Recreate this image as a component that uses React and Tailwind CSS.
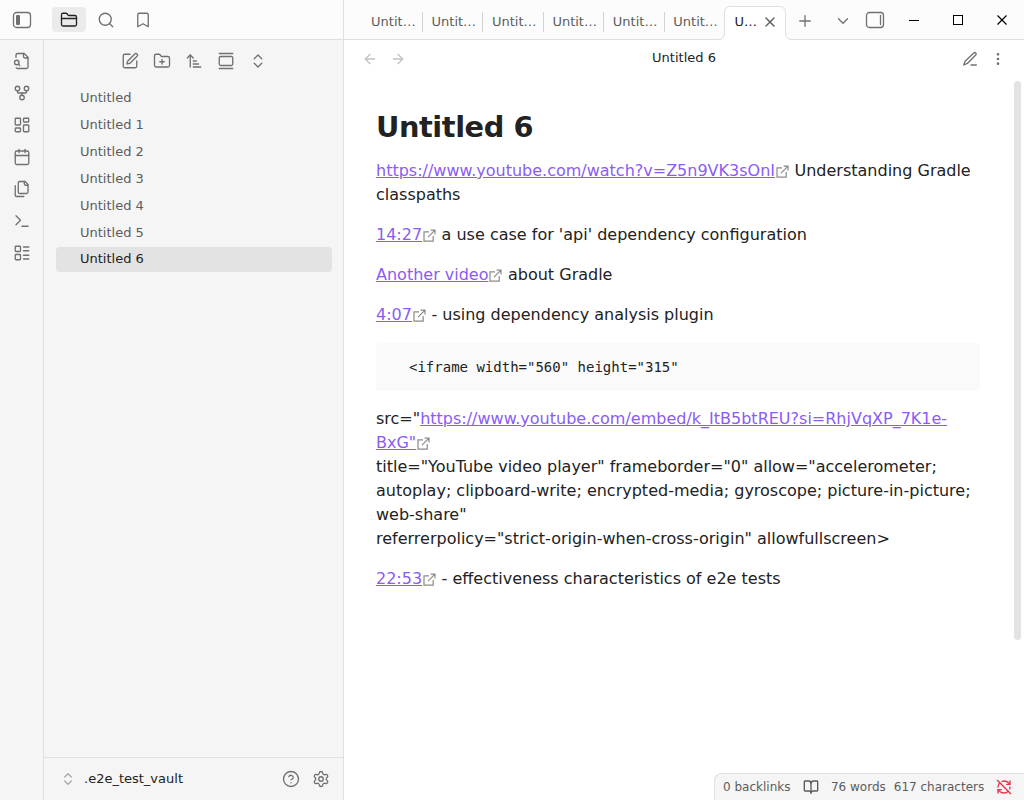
import React from 'react';
import {
  FolderClosed, Search, Bookmark, GitFork, LayoutDashboard, Calendar, Terminal, LayoutList,
  SquarePen, FolderPlus, ArrowUpNarrowWide, GalleryVertical, ChevronsUpDown, ArrowLeft, ArrowRight, X, Plus,
  ChevronDown, EllipsisVertical, BookOpen, RefreshCwOff, Settings, CircleHelp,
} from 'lucide-react';

const Files = ({ size }) => (
  <svg width={size} height={size} viewBox="0 0 24 24" fill="none" stroke="currentColor" strokeWidth="1.75" strokeLinecap="round" strokeLinejoin="round">
    <path d="M20 7h-3a2 2 0 0 1-2-2V2" />
    <path d="M9 18a2 2 0 0 1-2-2V4a2 2 0 0 1 2-2h7l4 4v10a2 2 0 0 1-2 2Z" />
    <path d="M3 7.6v12.8A1.6 1.6 0 0 0 4.6 22h9.8" />
  </svg>
);

const QuickSwitch = ({ size }) => (
  <svg width={size} height={size} viewBox="0 0 24 24" fill="none" stroke="currentColor" strokeWidth="1.75" strokeLinecap="round" strokeLinejoin="round">
    <path d="M14 2v4a2 2 0 0 0 2 2h4" />
    <path d="M4.268 21a2 2 0 0 0 1.727 1H18a2 2 0 0 0 2-2V7l-5-5H6a2 2 0 0 0-2 2v3" />
    <path d="m9 18-1.5-1.5" />
    <circle cx="5" cy="14" r="3" />
  </svg>
);

const EditLine = () => (
  <svg width="16" height="16" viewBox="0 0 24 24" fill="none" stroke="currentColor" strokeWidth="2" strokeLinecap="round" strokeLinejoin="round">
    <path d="M13.5 21h8" />
    <path d="M17.6 3.1a2.12 2.12 0 0 1 3 3L8 18.7 2.6 21l1.7-5.1Z" />
  </svg>
);

const SidebarToggle = ({ right }) => (
  <svg width="20" height="18" viewBox="0 0 20 18" fill="none" stroke="currentColor" strokeWidth="1.3">
    <rect x="1.5" y="1.5" width="17" height="15" rx="3" />
    {right
      ? <path d="M15.5 4.5v9" strokeLinecap="round" />
      : <rect x="4" y="4" width="4" height="10" rx="1" fill="currentColor" stroke="none" />}
  </svg>
);

const External = () => (
  <svg className="mr-[0.8px] ml-[0.6px] inline-block align-[-2px]" width="13" height="13" viewBox="0 0 13 13" fill="none" stroke="#8a8a8a" strokeWidth="1.2">
    <path d="M6 2.9H1v9.2h9.2V7M7.6 1.1h4.4v4.4M11.8 1.3 5 8.1" />
  </svg>
);

const Link = ({ children }) => (
  <><span className="text-[#8a5cf5] underline">{children}</span><External /></>
);

const files = ['Untitled', 'Untitled 1', 'Untitled 2', 'Untitled 3', 'Untitled 4', 'Untitled 5'];
const ribbon = [QuickSwitch, GitFork, LayoutDashboard, Calendar, Files, Terminal, LayoutList];
const actions = [SquarePen, FolderPlus, ArrowUpNarrowWide, GalleryVertical, ChevronsUpDown];

function TitleBar() {
  return (
    <header className="flex h-10 shrink-0 bg-[#fcfcfc] text-[#707070]">
      <div className="flex w-[344px] items-center border-r border-b border-[#e0e0e0] pl-3">
        <SidebarToggle />
        <div className="ml-5 flex h-[25px] w-[34px] items-center justify-center rounded bg-[#ebebeb] text-[#222222]">
          <FolderClosed size={18} strokeWidth={1.75} />
        </div>
        <Search className="ml-[11px]" size={18} strokeWidth={1.75} />
        <Bookmark className="ml-[19px]" size={18} strokeWidth={1.75} />
      </div>
      <div className="w-[18.5px] border-b border-[#e0e0e0]" />
      <div className="flex w-[362.5px] border-b border-[#e0e0e0] pt-3 text-[13px] text-[#5c5c5c]">
        {[0, 1, 2, 3, 4, 5].map((i) => (
          <div key={i} className={`flex h-5 w-[60.45px] shrink-0 items-center pl-[8.6px] ${i < 5 ? 'border-r border-[#d4d4d4]' : ''}`}>Untit…</div>
        ))}
      </div>
      <div className="relative -ml-px mt-[6px] flex h-[34px] w-[62.4px] items-center rounded-t-md border border-b-0 border-[#e0e0e0] bg-white pb-[4px] pl-[9.5px] text-[13px] text-[#222222]">
        <span className="w-[27.5px]">U…</span>
        <X className="mt-px text-[#5c5c5c]" size={16} strokeWidth={2} />
        <svg className="absolute bottom-0 -left-[6px]" width="6" height="6" viewBox="0 0 6 6"><path d="M0 5.5A5.5 5.5 0 0 0 5.5 0H6v6H0Z" fill="#fff" /><path d="M0 5.5A5.5 5.5 0 0 0 5.5 0" fill="none" stroke="#e0e0e0" /></svg>
        <svg className="absolute -right-[6px] bottom-0" width="6" height="6" viewBox="0 0 6 6"><path d="M6 5.5A5.5 5.5 0 0 1 .5 0H0v6h6Z" fill="#fff" /><path d="M6 5.5A5.5 5.5 0 0 1 .5 0" fill="none" stroke="#e0e0e0" /></svg>
      </div>
      <div className="flex flex-1 items-center border-b border-[#e0e0e0]">
        <Plus className="mt-[3px] ml-[9.6px]" size={18} strokeWidth={1.75} />
        <ChevronDown className="mt-[3px] ml-[20px]" size={18} strokeWidth={1.75} />
        <span className="ml-[13px]"><SidebarToggle right /></span>
        <svg className="ml-auto text-[#000000]" width="118" height="20" viewBox="0 0 118 20" fill="none" stroke="currentColor">
          <path d="M3 10.5h10" />
          <rect x="47.5" y="5.5" width="9" height="9" />
          <path d="m91.5 5.5 9 9m0-9-9 9" strokeWidth="1.2" />
        </svg>
      </div>
    </header>
  );
}

function Sidebar() {
  return (
    <aside className="flex w-[344px] shrink-0 border-r border-[#e0e0e0] bg-[#f5f5f5] text-[#707070]">
      <nav className="flex w-11 flex-col items-center gap-[14px] border-r border-[#e0e0e0] pt-3">
        {ribbon.map((Icon, i) => <Icon key={i} size={18} strokeWidth={1.75} />)}
      </nav>
      <div className="flex flex-1 flex-col text-[13px]">
        <div className="flex h-[45px] items-center justify-center gap-[14px] pb-[3px]">
          {actions.map((Icon, i) => <Icon key={i} size={18} strokeWidth={1.75} />)}
        </div>
        <div className="flex-1 pr-[11px] pl-3 text-[#5c5c5c]">
          {files.map((f) => <div key={f} className="mb-[2px] flex h-[25px] items-center pl-6">{f}</div>)}
          <div className="flex h-[25px] items-center rounded bg-[#e3e3e3] pb-[2px] pl-6 text-[#222222]">Untitled 6</div>
        </div>
        <div className="flex h-[43px] items-center border-t border-[#e0e0e0] pr-[13px] pl-4">
          <ChevronsUpDown className="text-[#ababab]" size={16} strokeWidth={2} />
          <span className="ml-2 flex-1 text-[#222222]">.e2e_test_vault</span>
          <CircleHelp size={18} strokeWidth={1.75} />
          <Settings className="ml-3" size={18} strokeWidth={1.75} />
        </div>
      </div>
    </aside>
  );
}

function Note() {
  return (
    <main className="relative flex flex-1 flex-col bg-white text-[#222222]">
      <div className="flex h-10 shrink-0 items-center px-[18px] pb-[2px] text-[#707070]">
        <ArrowLeft className="text-[#c2c2c2]" size={16} strokeWidth={2} />
        <ArrowRight className="ml-3 text-[#c2c2c2]" size={16} strokeWidth={2} />
        <span className="flex-1 pb-[2px] text-center text-[13px] text-[#222222]">Untitled 6</span>
        <EditLine />
        <EllipsisVertical className="ml-3" size={16} strokeWidth={2} />
      </div>
      <div className="flex-1 pr-11 pl-8 text-[16px] leading-6">
        <h1 className="mt-[30px] text-[28.8px] leading-[34px] font-bold tracking-[-0.015em]">Untitled 6</h1>
        <p className="mt-[15px]"><Link>https://www.youtube.com/watch?v=Z5n9VK3sOnI</Link> Understanding Gradle<br />classpaths</p>
        <p className="mt-4"><Link>14:27</Link> a use case for 'api' dependency configuration</p>
        <p className="mt-4"><Link>Another video</Link> about Gradle</p>
        <p className="mt-4"><Link>4:07</Link> - using dependency analysis plugin</p>
        <pre className="mt-4 flex h-12 items-center rounded bg-[#fafafa] pl-[33px] font-['DejaVu_Sans_Mono',monospace] text-[14px]">{'<iframe width="560" height="315"'}</pre>
        <p className="mt-4 whitespace-nowrap">
          src="<span className="text-[#8a5cf5] underline">https://www.youtube.com/embed/k_ItB5btREU?si=RhjVqXP_7K1e-</span><br />
          <Link>BxG"</Link><br />
          title="YouTube video player" frameborder="0" allow="accelerometer;<br />
          autoplay; clipboard-write; encrypted-media; gyroscope; picture-in-picture;<br />
          web-share"<br />
          referrerpolicy="strict-origin-when-cross-origin" allowfullscreen&gt;
        </p>
        <p className="mt-4"><Link>22:53</Link> - effectiveness characteristics of e2e tests</p>
      </div>
      <div className="absolute top-[41px] right-[3px] h-[559px] w-[7px] rounded bg-[#e3e3e3]" />
      <footer className="absolute right-0 bottom-0 flex h-[27px] w-[310px] items-center rounded-tl-lg border-t border-l border-[#e0e0e0] bg-[#f5f5f5] pl-2 text-[12px] whitespace-nowrap text-[#5c5c5c]">
        <span>0 backlinks</span>
        <BookOpen className="ml-[12.5px]" size={16} strokeWidth={2} />
        <span className="ml-3">76 words</span>
        <span className="ml-2">617 characters</span>
        <RefreshCwOff className="ml-[11.5px] text-[#e93147]" size={16} strokeWidth={2} />
      </footer>
    </main>
  );
}

export default function App() {
  return (
    <div className="flex h-[800px] w-[1024px] flex-col overflow-hidden font-['DejaVu_Sans',sans-serif]">
      <TitleBar />
      <div className="flex min-h-0 flex-1">
        <Sidebar />
        <Note />
      </div>
    </div>
  );
}
